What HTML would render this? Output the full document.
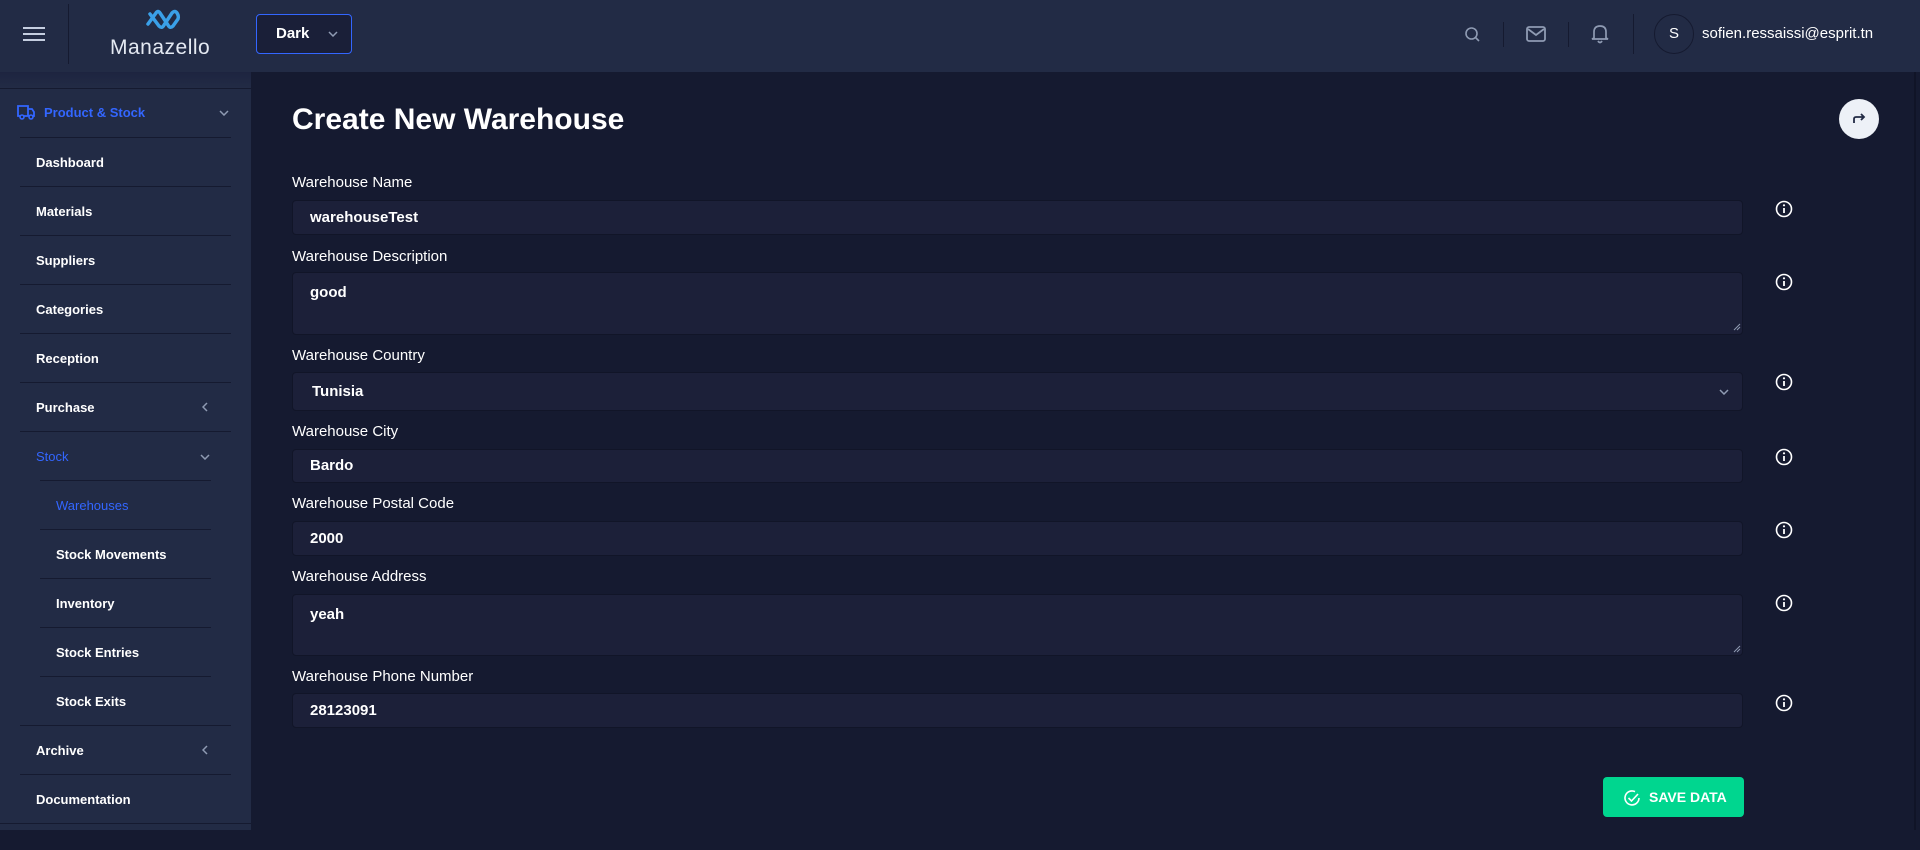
<!DOCTYPE html>
<html><head><meta charset="utf-8"><style>
*{box-sizing:border-box;margin:0;padding:0}
body{width:1920px;height:830px;overflow:hidden;background:#151a30;font-family:"Liberation Sans",sans-serif;position:relative;color:#fff}
.a{position:absolute}
#hdr{left:0;top:0;width:1920px;height:72px;background:#222b45}
#side{left:0;top:72px;width:251px;height:758px;background:#222b45}
.it{position:absolute;left:36px;font-size:13px;font-weight:bold;color:#fff;line-height:16px}
.sub{left:56px}
.dv{position:absolute;left:20px;width:211px;height:1px;background:#151a30}
.dvs{left:40px;width:171px}
.lbl{position:absolute;left:292px;font-size:15px;color:#fff}
.inp{position:absolute;left:292px;width:1451px;background:#1c2039;border:1px solid #111528;border-radius:4px;font-size:15px;font-weight:bold;padding-left:17px}
.info{position:absolute;left:1775px;width:18px;height:18px}
</style></head><body>
<div id="hdr" class="a">
 <svg class="a" style="left:23px;top:26px" width="22" height="16"><g stroke="#c5cee0" stroke-width="2"><line x1="0" y1="2" x2="22" y2="2"/><line x1="0" y1="8" x2="22" y2="8"/><line x1="0" y1="14" x2="22" y2="14"/></g></svg>
 <div class="a" style="left:68px;top:4px;width:1px;height:60px;background:#151a30"></div>
 <svg class="a" style="left:145px;top:8px" width="36" height="26"><path d="M3 16 L11 5 Q13 2 15 5 L23 17 Q25 21 28 18 L33 11 Q34 8 32 5 Q30 2 27 5 L19 17 Q17 21 14 18 L5 6" fill="none" stroke="#3aa0e8" stroke-width="3.5" stroke-linecap="round"/></svg>
 <div class="a" style="left:110px;top:36px;font-size:21px;color:#e4e9f2;letter-spacing:0.5px">Manazello</div>
 <div class="a" style="left:256px;top:14px;width:96px;height:40px;border:1px solid #3366ff;border-radius:4px;background:#1a1f38"></div>
 <div class="a" style="left:276px;top:25px;font-size:15px;font-weight:bold">Dark</div>
 <svg class="a" style="left:328px;top:31px" width="10" height="6"><path d="M1 1 L5 5 L9 1" fill="none" stroke="#8f9bb3" stroke-width="1.5"/></svg>
 <svg class="a" style="left:1464px;top:26px" width="18" height="18"><circle cx="7.5" cy="7.5" r="5.5" fill="none" stroke="#8f9bb3" stroke-width="1.6"/><line x1="11.5" y1="11.5" x2="15" y2="15" stroke="#8f9bb3" stroke-width="1.6"/></svg>
 <div class="a" style="left:1503px;top:22px;width:1px;height:25px;background:#151a30"></div>
 <svg class="a" style="left:1526px;top:26px" width="20" height="16"><rect x="1" y="1" width="18" height="14" rx="2" fill="none" stroke="#8f9bb3" stroke-width="1.8"/><path d="M2 3 L10 9 L18 3" fill="none" stroke="#8f9bb3" stroke-width="1.8"/></svg>
 <div class="a" style="left:1568px;top:22px;width:1px;height:25px;background:#151a30"></div>
 <svg class="a" style="left:1591px;top:23px" width="18" height="21"><path d="M3 15 L3 9 Q3 3 9 3 Q15 3 15 9 L15 15 L17 16 L1 16 Z M7 18 Q9 21 11 18" fill="none" stroke="#8f9bb3" stroke-width="1.7"/></svg>
 <div class="a" style="left:1633px;top:14px;width:1px;height:40px;background:#151a30"></div>
 <div class="a" style="left:1654px;top:14px;width:40px;height:40px;border:1px solid #151a30;border-radius:50%;text-align:center;line-height:38px;font-size:15px">S</div>
 <div class="a" style="left:1702px;top:25px;font-size:15px">sofien.ressaissi@esprit.tn</div>
</div>
<div id="side" class="a">
 <div class="a" style="left:0;top:0;width:251px;height:16px;background:linear-gradient(#1d2440,#222b45)"></div>
 <div class="a" style="left:0;top:16px;width:251px;height:1px;background:#151a30"></div>
 <div class="a" style="left:251px;top:218px;width:4px;height:560px;background:#151a30"></div>
</div>
<svg class="a" style="left:17px;top:104px" width="18" height="16"><path d="M1 2 H11 V12 H1 Z M11 5 H15 L17 8 V12 H11" fill="none" stroke="#3366ff" stroke-width="1.8"/><circle cx="5" cy="13" r="2" fill="#222b45" stroke="#3366ff" stroke-width="1.6"/><circle cx="14" cy="13" r="2" fill="#222b45" stroke="#3366ff" stroke-width="1.6"/></svg>
<div class="it" style="left:44px;top:105px;color:#3366ff">Product &amp; Stock</div>
<svg class="a" style="left:219px;top:110px" width="10" height="6"><path d="M1 1 L5 5 L9 1" fill="none" stroke="#8f9bb3" stroke-width="1.5"/></svg>
<div class="dv" style="top:137px"></div>
<div class="it" style="top:155px">Dashboard</div><div class="dv" style="top:186px"></div>
<div class="it" style="top:204px">Materials</div><div class="dv" style="top:235px"></div>
<div class="it" style="top:253px">Suppliers</div><div class="dv" style="top:284px"></div>
<div class="it" style="top:302px">Categories</div><div class="dv" style="top:333px"></div>
<div class="it" style="top:351px">Reception</div><div class="dv" style="top:382px"></div>
<div class="it" style="top:400px">Purchase</div>
<svg class="a" style="left:202px;top:402px" width="6" height="10"><path d="M5 1 L1 5 L5 9" fill="none" stroke="#8f9bb3" stroke-width="1.5"/></svg>
<div class="dv" style="top:431px"></div>
<div class="it" style="top:449px;color:#3366ff;font-weight:normal">Stock</div>
<svg class="a" style="left:200px;top:454px" width="10" height="6"><path d="M1 1 L5 5 L9 1" fill="none" stroke="#8f9bb3" stroke-width="1.5"/></svg>
<div class="dv dvs" style="top:480px"></div>
<div class="it sub" style="top:498px;color:#3366ff;font-weight:normal">Warehouses</div><div class="dv dvs" style="top:529px"></div>
<div class="it sub" style="top:547px">Stock Movements</div><div class="dv dvs" style="top:578px"></div>
<div class="it sub" style="top:596px">Inventory</div><div class="dv dvs" style="top:627px"></div>
<div class="it sub" style="top:645px">Stock Entries</div><div class="dv dvs" style="top:676px"></div>
<div class="it sub" style="top:694px">Stock Exits</div><div class="dv" style="top:725px"></div>
<div class="it" style="top:743px">Archive</div>
<svg class="a" style="left:202px;top:745px" width="6" height="10"><path d="M5 1 L1 5 L5 9" fill="none" stroke="#8f9bb3" stroke-width="1.5"/></svg>
<div class="dv" style="top:774px"></div>
<div class="it" style="top:792px">Documentation</div>
<div class="a" style="left:0;top:823px;width:251px;height:1px;background:#151a30"></div>

<div class="a" style="left:292px;top:103px;font-size:30px;font-weight:bold">Create New Warehouse</div>
<div class="a" style="left:1839px;top:99px;width:40px;height:40px;border-radius:50%;background:#edf1f7"></div>
<svg class="a" style="left:1851px;top:111px" width="16" height="14"><path d="M3 12 V8 Q3 6 5 6 H13 M10 3 L13 6 L10 9" fill="none" stroke="#222b45" stroke-width="1.8"/></svg>
<div class="a" style="left:1914px;top:72px;width:2px;height:758px;background:#101427"></div>

<div class="lbl" style="top:174px">Warehouse Name</div>
<div class="inp" style="top:200px;height:35px;line-height:33px">warehouseTest</div>
<div class="lbl" style="top:248px">Warehouse Description</div>
<div class="inp" style="top:272px;height:63px;padding-top:11px">good</div>
<div class="lbl" style="top:347px">Warehouse Country</div>
<div class="inp" style="top:372px;height:39px;line-height:37px;padding-left:19px">Tunisia</div>
<svg class="a" style="left:1719px;top:389px" width="10" height="6"><path d="M1 1 L5 5 L9 1" fill="none" stroke="#8f9bb3" stroke-width="1.5"/></svg>
<div class="lbl" style="top:423px">Warehouse City</div>
<div class="inp" style="top:449px;height:34px;line-height:32px">Bardo</div>
<div class="lbl" style="top:495px">Warehouse Postal Code</div>
<div class="inp" style="top:521px;height:35px;line-height:33px">2000</div>
<div class="lbl" style="top:568px">Warehouse Address</div>
<div class="inp" style="top:594px;height:62px;padding-top:11px">yeah</div>
<div class="lbl" style="top:668px">Warehouse Phone Number</div>
<div class="inp" style="top:693px;height:35px;line-height:33px">28123091</div>
<svg class="a" style="left:1733px;top:323px" width="8" height="8"><path d="M7 1 L1 7 M7 4 L4 7" stroke="#8f9bb3" stroke-width="1"/></svg>
<svg class="a" style="left:1733px;top:645px" width="8" height="8"><path d="M7 1 L1 7 M7 4 L4 7" stroke="#8f9bb3" stroke-width="1"/></svg>

<svg class="info" style="top:200px" viewBox="0 0 18 18"><circle cx="9" cy="9" r="7.5" fill="none" stroke="#fff" stroke-width="1.6"/><line x1="9" y1="8" x2="9" y2="13" stroke="#fff" stroke-width="1.8"/><circle cx="9" cy="5.3" r="1.1" fill="#fff"/></svg>
<svg class="info" style="top:273px" viewBox="0 0 18 18"><circle cx="9" cy="9" r="7.5" fill="none" stroke="#fff" stroke-width="1.6"/><line x1="9" y1="8" x2="9" y2="13" stroke="#fff" stroke-width="1.8"/><circle cx="9" cy="5.3" r="1.1" fill="#fff"/></svg>
<svg class="info" style="top:373px" viewBox="0 0 18 18"><circle cx="9" cy="9" r="7.5" fill="none" stroke="#fff" stroke-width="1.6"/><line x1="9" y1="8" x2="9" y2="13" stroke="#fff" stroke-width="1.8"/><circle cx="9" cy="5.3" r="1.1" fill="#fff"/></svg>
<svg class="info" style="top:448px" viewBox="0 0 18 18"><circle cx="9" cy="9" r="7.5" fill="none" stroke="#fff" stroke-width="1.6"/><line x1="9" y1="8" x2="9" y2="13" stroke="#fff" stroke-width="1.8"/><circle cx="9" cy="5.3" r="1.1" fill="#fff"/></svg>
<svg class="info" style="top:521px" viewBox="0 0 18 18"><circle cx="9" cy="9" r="7.5" fill="none" stroke="#fff" stroke-width="1.6"/><line x1="9" y1="8" x2="9" y2="13" stroke="#fff" stroke-width="1.8"/><circle cx="9" cy="5.3" r="1.1" fill="#fff"/></svg>
<svg class="info" style="top:594px" viewBox="0 0 18 18"><circle cx="9" cy="9" r="7.5" fill="none" stroke="#fff" stroke-width="1.6"/><line x1="9" y1="8" x2="9" y2="13" stroke="#fff" stroke-width="1.8"/><circle cx="9" cy="5.3" r="1.1" fill="#fff"/></svg>
<svg class="info" style="top:694px" viewBox="0 0 18 18"><circle cx="9" cy="9" r="7.5" fill="none" stroke="#fff" stroke-width="1.6"/><line x1="9" y1="8" x2="9" y2="13" stroke="#fff" stroke-width="1.8"/><circle cx="9" cy="5.3" r="1.1" fill="#fff"/></svg>

<div class="a" style="left:1603px;top:777px;width:141px;height:40px;background:#00d68f;border-radius:4px"></div>
<svg class="a" style="left:1623px;top:789px" width="18" height="18"><path d="M16 9 A7 7 0 1 1 12 2.6" fill="none" stroke="#fff" stroke-width="1.6"/><path d="M5.5 9 L8.5 12 L15 5" fill="none" stroke="#fff" stroke-width="1.6"/></svg>
<div class="a" style="left:1649px;top:789px;font-size:14px;font-weight:bold">SAVE DATA</div>
</body></html>
